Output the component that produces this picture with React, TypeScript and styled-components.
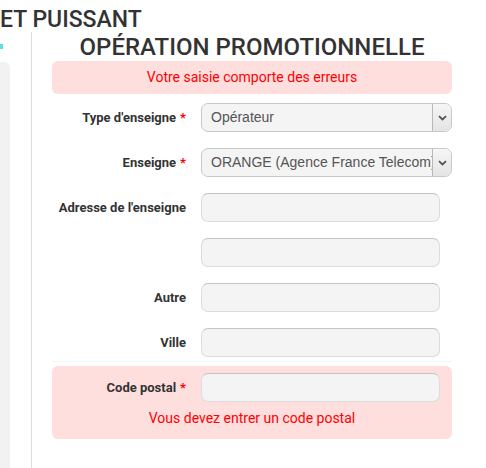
import styled, { createGlobalStyle } from 'styled-components';

const GlobalStyle = createGlobalStyle`
  html, body {
    margin: 0;
    padding: 0;
    background: #fff;
  }
  body {
    font-family: Roboto, "Liberation Sans", Arial, sans-serif;
    color: #333;
  }
`;

const Page = styled.div`
  width: 486px;
  height: 468px;
  overflow: hidden;
  display: flex;
  flex-direction: column;
`;

const PrevTitle = styled.h1`
  margin: 0;
  padding-top: 7px;
  height: 25px;
  font-size: 23px;
  font-weight: 500;
  line-height: 25px;
  color: #333;
  white-space: nowrap;
`;

const Body = styled.div`
  flex: 1;
  display: flex;
`;

const SideCol = styled.div`
  width: 31px;
  border-right: 1px solid #ddd;
  display: flex;
  flex-direction: column;
`;

const SideMark = styled.div`
  width: 3px;
  height: 5px;
  margin-top: 12px;
  background: #5ce0e6;
`;

const SideCard = styled.div`
  width: 10px;
  flex: 1;
  margin-top: 13px;
  background: #f2f2f2;
  border-top-right-radius: 6px;
`;

const Main = styled.div`
  width: 400px;
  padding-left: 20px;
  display: flex;
  flex-direction: column;
`;

const Title = styled.h2`
  margin: 0;
  height: 28px;
  padding-top: 1px;
  text-align: center;
  font-size: 24px;
  font-weight: 500;
  line-height: 28px;
  color: #333;
  white-space: nowrap;
`;

const Alert = styled.div`
  height: 33px;
  border-radius: 6px;
  background: #ffdede;
  color: #ff0000;
  font-size: 14px;
  line-height: 33px;
  text-align: center;
`;

const Form = styled.div`
  display: flex;
  flex-direction: column;
  margin-top: 9px;
`;

const Row = styled.div`
  display: flex;
  align-items: center;
  height: 29px;
  margin-bottom: 16px;
`;

const Label = styled.label`
  width: 134px;
  padding-right: 15px;
  text-align: right;
  font-size: 13px;
  font-weight: 700;
  color: #333;
  white-space: nowrap;
`;

const Star = styled.span`
  color: #ff0000;
  margin-left: 4px;
`;

const Input = styled.div`
  width: 237px;
  height: 27px;
  border: 1px solid #dcdcdc;
  border-top-color: #c4c4c4;
  border-radius: 7px;
  background: #f4f4f4;
`;

const Select = styled.div`
  width: 249px;
  height: 27px;
  display: flex;
  border: 1px solid #c8c8c8;
  border-radius: 7px;
  background: #f4f4f4;
  overflow: hidden;
`;

const SelectText = styled.div`
  flex: 1;
  padding-left: 9px;
  font-family: "Liberation Sans", Arial, sans-serif;
  font-size: 14px;
  line-height: 27px;
  color: #555;
  white-space: nowrap;
  overflow: hidden;
`;

const SelectArrow = styled.div`
  width: 18px;
  border-left: 1px solid #b8b8b8;
  background: linear-gradient(#f6f6f6, #e4e4e4);
  display: flex;
  align-items: center;
  justify-content: center;
`;

const Separator = styled.div`
  height: 1px;
  background: #f5f5f5;
  margin-top: -12px;
  margin-bottom: 4px;
`;

const ErrorBox = styled.div`
  height: 73px;
  border-radius: 6px;
  background: #ffdede;
  padding-top: 7px;
  box-sizing: border-box;
`;

const ErrorRow = styled(Row)`
  margin-bottom: 0;
`;

const FieldError = styled.div`
  margin-top: 4px;
  text-align: center;
  font-size: 14px;
  line-height: 24px;
  color: #ff0000;
`;

function Arrow() {
  return (
    <svg width="9" height="6" viewBox="0 0 9 6">
      <path d="M1 1.2 L4.5 4.5 L8 1.2" fill="none" stroke="#555" strokeWidth="1.8" />
    </svg>
  );
}

export default function App() {
  return (
    <Page>
      <GlobalStyle />
      <PrevTitle>ET PUISSANT</PrevTitle>
      <Body>
        <SideCol>
          <SideMark />
          <SideCard />
        </SideCol>
        <Main>
          <Title>OPÉRATION PROMOTIONNELLE</Title>
          <Alert>Votre saisie comporte des erreurs</Alert>
          <Form>
            <Row>
              <Label>
                Type d'enseigne<Star>*</Star>
              </Label>
              <Select>
                <SelectText>Opérateur</SelectText>
                <SelectArrow>
                  <Arrow />
                </SelectArrow>
              </Select>
            </Row>
            <Row>
              <Label>
                Enseigne<Star>*</Star>
              </Label>
              <Select>
                <SelectText>ORANGE (Agence France Telecom)</SelectText>
                <SelectArrow>
                  <Arrow />
                </SelectArrow>
              </Select>
            </Row>
            <Row>
              <Label>Adresse de l'enseigne</Label>
              <Input />
            </Row>
            <Row>
              <Label />
              <Input />
            </Row>
            <Row>
              <Label>Autre</Label>
              <Input />
            </Row>
            <Row>
              <Label>Ville</Label>
              <Input />
            </Row>
            <Separator />
            <ErrorBox>
              <ErrorRow>
                <Label>
                  Code postal<Star>*</Star>
                </Label>
                <Input />
              </ErrorRow>
              <FieldError>Vous devez entrer un code postal</FieldError>
            </ErrorBox>
          </Form>
        </Main>
      </Body>
    </Page>
  );
}
